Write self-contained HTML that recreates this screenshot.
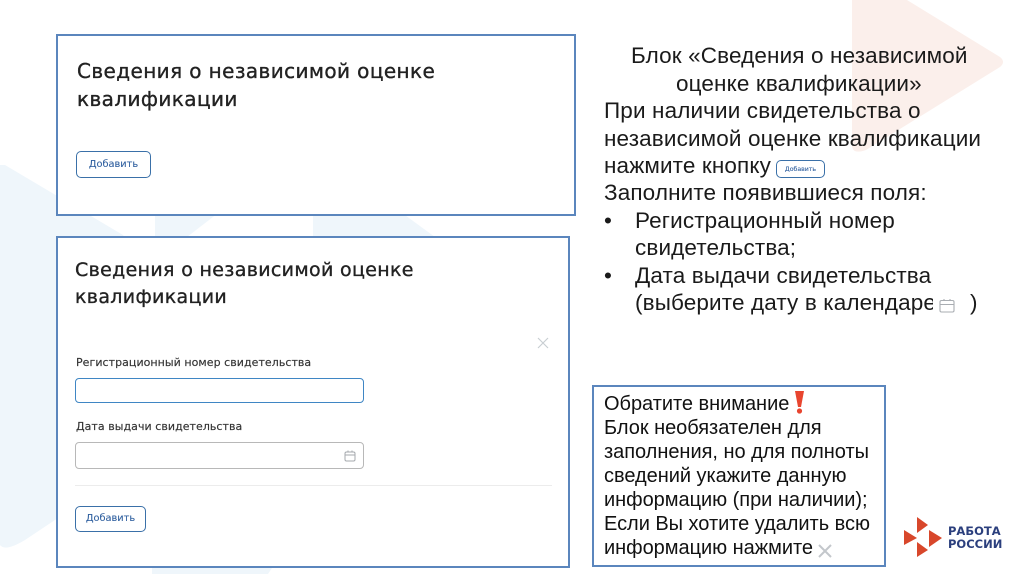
<!DOCTYPE html>
<html lang="ru"><head><meta charset="utf-8"><style>
html,body{margin:0;padding:0;background:#fff}
#p{position:relative;width:1024px;height:574px;overflow:hidden;background:#fff;font-family:"Liberation Sans",sans-serif;color:#111}
.a{position:absolute;white-space:nowrap}
.box{position:absolute;box-sizing:border-box;border:2px solid #5b86bd;background:#fff}
.h{font-family:"DejaVu Sans",sans-serif;font-size:20px;line-height:20px;color:#222;letter-spacing:.4px;-webkit-text-stroke:.35px #222}
.h2{font-size:19px;letter-spacing:.33px}
.l{font-family:"DejaVu Sans",sans-serif;font-size:11px;line-height:14px;color:#333;letter-spacing:.05px;-webkit-text-stroke:.15px #333}
.b{position:absolute;box-sizing:border-box;border:1.5px solid #3a70a8;border-radius:5px;background:#fff;color:#2f5f9f;font-family:"DejaVu Sans",sans-serif;font-size:9.8px;text-align:center;-webkit-text-stroke:.1px #2f5f9f}
.r{font-size:22.5px;line-height:24px;color:#1a1a1a;letter-spacing:.13px}
.s{font-size:20px;line-height:22px;color:#111;letter-spacing:-.03px}
</style></head><body><div id="p">
<svg class="a" style="left:0;top:0" width="1024" height="574">
<path d="M852 0H907L1000 57Q1006 62 1000 67L866 150Q852 155 852 145Z" fill="#fbefeb"/>
<path d="M0 165H5L123 235L160 300V450L25 540Q5 552 0 545Z" fill="#eff6fb"/>
<path d="M155 210H222L187 237H155Z" fill="#eff6fb"/>
<path d="M313 210H398L435 237H313Z" fill="#eff6fb"/>
<path d="M152 565H274L268 574H152Z" fill="#eff6fb"/>
</svg>

<div class="box" style="left:56px;top:34px;width:520px;height:182px"></div>
<div class="a h" style="left:77px;top:61px">Сведения о независимой оценке</div>
<div class="a h" style="left:77px;top:89px">квалификации</div>
<div class="b" style="left:76px;top:151px;width:75px;height:27px;line-height:25px">Добавить</div>

<div class="box" style="left:56px;top:236px;width:514px;height:332px"></div>
<div class="a h h2" style="left:75px;top:260px">Сведения о независимой оценке</div>
<div class="a h h2" style="left:75px;top:287px">квалификации</div>
<svg class="a" style="left:536px;top:336px" width="14" height="14"><path d="M2 2L12 12M12 2L2 12" stroke="#c9ced3" stroke-width="1.2" fill="none"/></svg>
<div class="a l" style="left:76px;top:356px">Регистрационный номер свидетельства</div>
<div class="a" style="left:75px;top:378px;width:289px;height:25px;box-sizing:border-box;border:1.3px solid #3f86c4;border-radius:4px;background:#fff"></div>
<div class="a l" style="left:76px;top:420px">Дата выдачи свидетельства</div>
<div class="a" style="left:75px;top:442px;width:289px;height:27px;box-sizing:border-box;border:1.3px solid #b8b8b8;border-radius:4px;background:#fff"></div>
<svg class="a" style="left:343px;top:449px" width="14" height="14"><path d="M3.5 3H10.500Q12 3 12 4.500V10.500Q12 12 10.500 12H3.500Q2 12 2 10.500V4.500Q2 3 3.500 3ZM2 6H12M5 1.500V3M9 1.500V3" stroke="#a5a9ad" stroke-width="1" fill="none"/></svg>
<div class="a" style="left:75px;top:485px;width:477px;height:1px;background:#ececec"></div>
<div class="b" style="left:75px;top:506px;width:71px;height:26px;line-height:24px">Добавить</div>

<div class="a r" style="left:631px;top:44px">Блок «Сведения о независимой</div>
<div class="a r" style="left:676px;top:72px">оценке квалификации»</div>
<div class="a r" style="left:604px;top:99px">При наличии свидетельства о</div>
<div class="a r" style="left:604px;top:127px">независимой оценке квалификации</div>
<div class="a r" style="left:604px;top:154px">нажмите кнопку</div>
<div class="b" style="left:776px;top:160px;width:49px;height:18px;line-height:17px;font-size:6.2px;border-width:1px">Добавить</div>
<div class="a r" style="left:604px;top:181px">Заполните появившиеся поля:</div>
<div class="a r" style="left:604px;top:209px">•</div>
<div class="a r" style="left:635px;top:209px">Регистрационный номер</div>
<div class="a r" style="left:635px;top:236px">свидетельства;</div>
<div class="a r" style="left:604px;top:264px">•</div>
<div class="a r" style="left:635px;top:264px">Дата выдачи свидетельства</div>
<div class="a r" style="left:635px;top:291px">(выберите дату в календаре</div>
<div class="a" style="left:933px;top:292px;width:26px;height:26px;background:#fff"></div>
<svg class="a" style="left:938px;top:298px" width="18" height="16"><path d="M3.500 2.500H14.500Q16 2.500 16 4V12.500Q16 14 14.500 14H3.500Q2 14 2 12.500V4Q2 2.500 3.500 2.500ZM2 6.500H16M6 1V2.500M12 1V2.500" stroke="#a9adb2" stroke-width="1.100" fill="none"/></svg>
<div class="a r" style="left:970px;top:291px">)</div>

<div class="box" style="left:592px;top:385px;width:294px;height:182px"></div>
<div class="a s" style="left:604px;top:393px">Обратите внимание</div>
<svg class="a" style="left:791px;top:390px" width="16" height="26"><path d="M4 1H13L10 17H7Z" fill="#e8452f"/><circle cx="8.500" cy="21" r="2.600" fill="#e8452f"/></svg>
<div class="a s" style="left:604px;top:417px">Блок необязателен для</div>
<div class="a s" style="left:604px;top:441px">заполнения, но для полноты</div>
<div class="a s" style="left:604px;top:465px">сведений укажите данную</div>
<div class="a s" style="left:604px;top:489px">информацию (при наличии);</div>
<div class="a s" style="left:604px;top:513px">Если Вы хотите удалить всю</div>
<div class="a s" style="left:604px;top:537px">информацию нажмите</div>
<svg class="a" style="left:816px;top:542px" width="18" height="18"><path d="M3 3L15 15M15 3L3 15" stroke="#c3c7cb" stroke-width="2" fill="none"/></svg>

<svg class="a" style="left:900px;top:512px" width="50" height="50">
<path d="M17 5L28 13L17 21Z" fill="#d8472b"/>
<path d="M4 18L17 26L4 33Z" fill="#d8472b"/>
<path d="M29 18L42 26L29 35Z" fill="#d8472b"/>
<path d="M17 30L28 38L17 45Z" fill="#d8472b"/>
</svg>
<div class="a" style="left:948px;top:525px;font-family:'DejaVu Sans',sans-serif;font-weight:bold;font-size:11.500px;line-height:13px;color:#2b3f7d">РАБОТА<br>РОССИИ</div>
</div></body></html>
